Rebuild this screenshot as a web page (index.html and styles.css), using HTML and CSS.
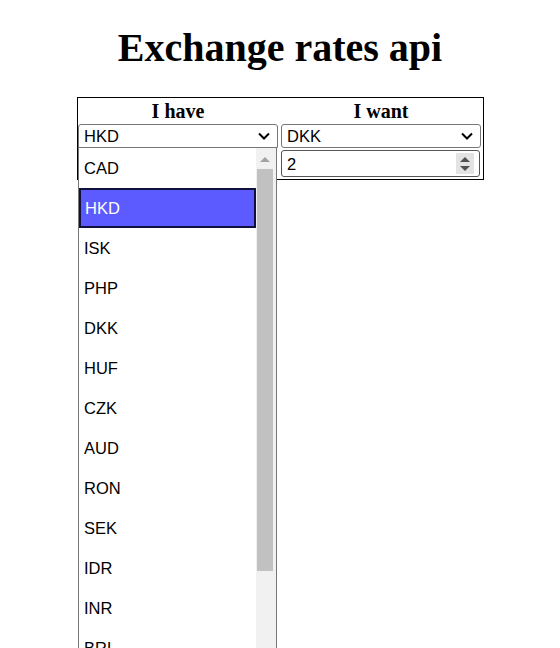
FILE: index.html
```html
<!DOCTYPE html>
<html>
<head>
<meta charset="utf-8">
<title>Exchange rates api</title>
<link rel="stylesheet" href="styles.css">
</head>
<body>
<h1 class="title">Exchange rates api</h1>
<div class="converter">
  <div class="head">I have</div>
  <div class="head">I want</div>
  <div class="col">
    <div class="select open">
      <span class="value">HKD</span>
      <svg class="chev" width="12" height="8" viewBox="0 0 12 8"><path d="M1 1.5 L6 6.5 L11 1.5" fill="none" stroke="#000" stroke-width="2"/></svg>
      <div class="dropdown">
        <ul class="options">
          <li class="opt">CAD</li>
          <li class="opt selected">HKD</li>
          <li class="opt">ISK</li>
          <li class="opt">PHP</li>
          <li class="opt">DKK</li>
          <li class="opt">HUF</li>
          <li class="opt">CZK</li>
          <li class="opt">AUD</li>
          <li class="opt">RON</li>
          <li class="opt">SEK</li>
          <li class="opt">IDR</li>
          <li class="opt">INR</li>
          <li class="opt">BRL</li>
        </ul>
        <div class="scrollbar">
          <svg class="arrow-up" width="16" height="21" viewBox="0 0 16 21"><path d="M3 14 L8 9 L13 14 Z" fill="#a3a3a3"/></svg>
          <div class="thumb"></div>
        </div>
      </div>
    </div>
  </div>
  <div class="col">
    <div class="select">
      <span class="value">DKK</span>
      <svg class="chev" width="12" height="8" viewBox="0 0 12 8"><path d="M1 1.5 L6 6.5 L11 1.5" fill="none" stroke="#000" stroke-width="2"/></svg>
    </div>
    <div class="number">
      <span class="value">2</span>
      <div class="spin">
        <svg width="16" height="20" viewBox="0 0 16 20"><path d="M3 8 L8 3 L13 8 Z" fill="#505050"/><path d="M3 12 L8 17 L13 12 Z" fill="#505050"/></svg>
      </div>
    </div>
  </div>
</div>
</body>
</html>
```

FILE: styles.css
```css
html, body {
  margin: 0;
  padding: 0;
  background: #fff;
}
body {
  padding: 0 8px;
  font-family: "Liberation Serif", "Times New Roman", serif;
  color: #000;
  height: 648px;
  overflow: hidden;
}
.title {
  margin: 0;
  padding-top: 26px;
  height: 71px;
  box-sizing: border-box;
  font-size: 40px;
  font-weight: bold;
  text-align: center;
  line-height: 44px;
}
.converter {
  width: 403px;
  margin: 26px 0 0 69px;
  border: 1px solid #000;
  display: grid;
  grid-template-columns: 200px 200px;
  column-gap: 3px;
  padding: 0 2px 2px 0;
}
.head {
  font-size: 20px;
  font-weight: bold;
  text-align: center;
  height: 26px;
  line-height: 26px;
}
.col {
  display: flex;
  flex-direction: column;
  gap: 2px;
}
.select, .number {
  position: relative;
  box-sizing: border-box;
  border: 1px solid #767676;
  border-radius: 3px;
  background: #fff;
  font-family: "Liberation Sans", Arial, sans-serif;
  font-size: 16.5px;
  display: flex;
  align-items: center;
  padding-left: 5px;
}
.select {
  height: 24px;
  justify-content: space-between;
  padding-right: 7px;
}
.select.open {
  border-radius: 3px 3px 0 0;
}
.number {
  height: 27px;
  width: 199px;
  padding-right: 5px;
  justify-content: space-between;
  border-color: #555;
}
.value {
  line-height: 20px;
}
.spin {
  width: 18px;
  height: 21px;
  background: #e3e3e3;
  display: flex;
  align-items: center;
  justify-content: center;
}
.dropdown {
  position: absolute;
  left: -1px;
  top: 22px;
  width: 199px;
  height: 530px;
  box-sizing: border-box;
  border: 1px solid #767676;
  border-bottom: none;
  background: #fff;
  display: flex;
  z-index: 10;
}
.options {
  list-style: none;
  margin: 0;
  padding: 0;
  width: 177px;
}
.opt {
  height: 40px;
  line-height: 40px;
  padding-left: 5px;
  box-sizing: border-box;
  font-size: 16.5px;
  color: #000;
}
.opt.selected {
  background: #5b5bff;
  color: #fff;
  border: 2px solid #10103a;
  line-height: 36px;
  padding-left: 4px;
}
.scrollbar {
  flex: 1;
  background: #f1f1f1;
  display: flex;
  flex-direction: column;
  padding-left: 1px;
  box-sizing: border-box;
}
.arrow-up {
  display: block;
  width: 16px;
  height: 21px;
}
.thumb {
  width: 16px;
  height: 402px;
  background: #c1c1c1;
}
```
